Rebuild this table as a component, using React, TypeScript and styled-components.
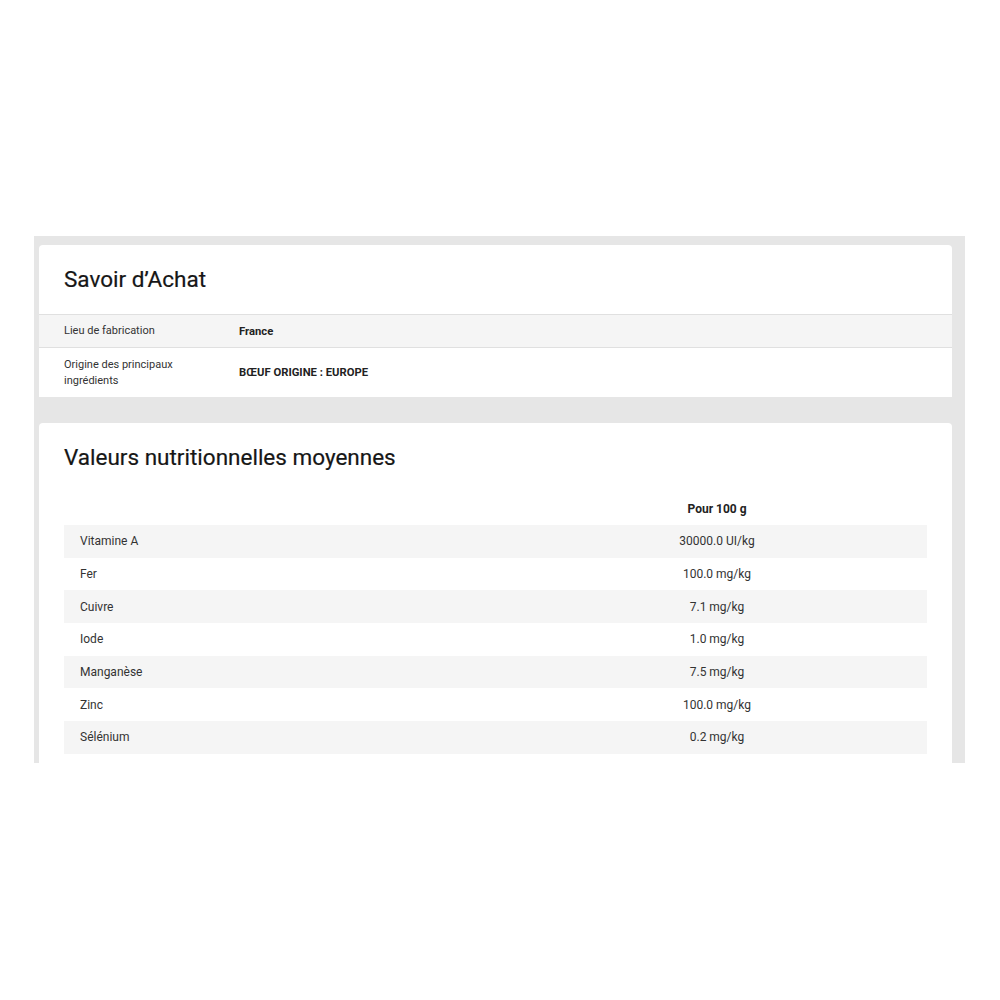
import React from "react";
import styled, { createGlobalStyle } from "styled-components";

const Global = createGlobalStyle`
  html, body { margin: 0; padding: 0; background: #fff; }
  body { font-family: Roboto, "Liberation Sans", Arial, sans-serif; color: #222; }
`;

const Page = styled.div`
  padding: 236px 35px 0 34px;
`;

const Panel = styled.div`
  background: #e6e6e6;
  height: 527px;
  overflow: hidden;
  padding: 9px 13px 0 5px;
  box-sizing: border-box;
  display: flex;
  flex-direction: column;
  gap: 26px;
`;

const Card = styled.section`
  background: #fff;
  border-radius: 4px;
  flex-shrink: 0;
`;

const Title = styled.h2`
  margin: 0;
  font-size: 22.5px;
  font-weight: 400;
  line-height: 26px;
  color: #161616;
  padding: 21px 25px 22px;
  -webkit-text-stroke: 0.2px #161616;
`;

const InfoRow = styled.div<{ $shade?: boolean; $h: number }>`
  display: grid;
  grid-template-columns: 175px 1fr;
  align-items: center;
  height: ${(p) => p.$h}px;
  box-sizing: border-box;
  padding: 0 25px;
  background: ${(p) => (p.$shade ? "#f5f5f5" : "#fff")};
  border-top: 1px solid #e0e0e0;
`;

const InfoLabel = styled.div`
  font-size: 11px;
  line-height: 16px;
  color: #333;
`;

const InfoValue = styled.div`
  font-size: 11.25px;
  font-weight: 700;
  color: #222;
`;

const Table = styled.div`
  margin: 0 25px;
`;

const TRow = styled.div<{ $shade?: boolean; $h?: number }>`
  display: grid;
  grid-template-columns: 443px 1fr;
  align-items: center;
  height: ${(p) => p.$h ?? 32.7}px;
  background: ${(p) => (p.$shade ? "#f5f5f5" : "#fff")};
  font-size: 12px;
  color: #333;
`;

const TLabel = styled.div`
  padding-left: 16px;
`;

const TValue = styled.div<{ $bold?: boolean }>`
  text-align: center;
  font-weight: ${(p) => (p.$bold ? 700 : 400)};
  color: ${(p) => (p.$bold ? "#222" : "#333")};
`;

const rows: [string, string][] = [
  ["Vitamine A", "30000.0 UI/kg"],
  ["Fer", "100.0 mg/kg"],
  ["Cuivre", "7.1 mg/kg"],
  ["Iode", "1.0 mg/kg"],
  ["Manganèse", "7.5 mg/kg"],
  ["Zinc", "100.0 mg/kg"],
  ["Sélénium", "0.2 mg/kg"],
];

export default function App() {
  return (
    <>
      <Global />
      <Page>
        <Panel>
          <Card>
            <Title>Savoir d’Achat</Title>
            <InfoRow $shade $h={33}>
              <InfoLabel>Lieu de fabrication</InfoLabel>
              <InfoValue>France</InfoValue>
            </InfoRow>
            <InfoRow $h={50}>
              <InfoLabel>
                Origine des principaux
                <br />
                ingrédients
              </InfoLabel>
              <InfoValue>BŒUF ORIGINE : EUROPE</InfoValue>
            </InfoRow>
          </Card>
          <Card>
            <Title>Valeurs nutritionnelles moyennes</Title>
            <Table>
              <TRow $h={33}>
                <TLabel />
                <TValue $bold>Pour 100 g</TValue>
              </TRow>
              {rows.map(([l, v], i) => (
                <TRow key={l} $shade={i % 2 === 0}>
                  <TLabel>{l}</TLabel>
                  <TValue>{v}</TValue>
                </TRow>
              ))}
              <TRow />
            </Table>
          </Card>
        </Panel>
      </Page>
    </>
  );
}
